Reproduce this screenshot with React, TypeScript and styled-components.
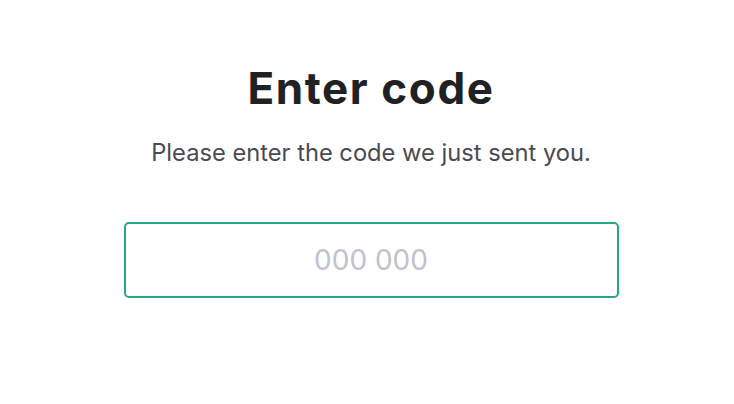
import { FunctionComponent } from 'react';
import styled, { createGlobalStyle } from 'styled-components';

const GlobalStyle = createGlobalStyle`
  html, body {
    margin: 0;
    padding: 0;
    background: #ffffff;
  }
  body {
    font-family: Inter, 'Liberation Sans', Arial, sans-serif;
  }
`;

const Page = styled.main`
  width: 734px;
  height: 404px;
  display: flex;
  flex-direction: column;
  align-items: center;
  padding: 58px 0 0 8px;
  box-sizing: border-box;
`;

const Title = styled.h1`
  margin: 0;
  font-size: 44px;
  font-weight: 700;
  color: #202123;
  line-height: 60px;
  letter-spacing: 1.6px;
`;

const Subtitle = styled.p`
  margin: 19px 0 0;
  font-size: 23.7px;
  line-height: 32px;
  color: #4a4a52;
`;

const CodeInput = styled.input`
  margin-top: 53px;
  width: 495px;
  height: 76px;
  box-sizing: border-box;
  border: 2.5px solid #28a784;
  border-radius: 5px;
  outline: none;
  text-align: center;
  font-family: Inter, 'Liberation Sans', Arial, sans-serif;
  font-size: 28px;
  color: #202123;
  background: #fff;
  &::placeholder {
    color: #c2c1ce;
  }
`;

const App: FunctionComponent = () => {
  return (
    <Page>
      <GlobalStyle />
      <Title>Enter code</Title>
      <Subtitle>Please enter the code we just sent you.</Subtitle>
      <CodeInput type="text" placeholder="000 000" />
    </Page>
  );
};

export default App;
